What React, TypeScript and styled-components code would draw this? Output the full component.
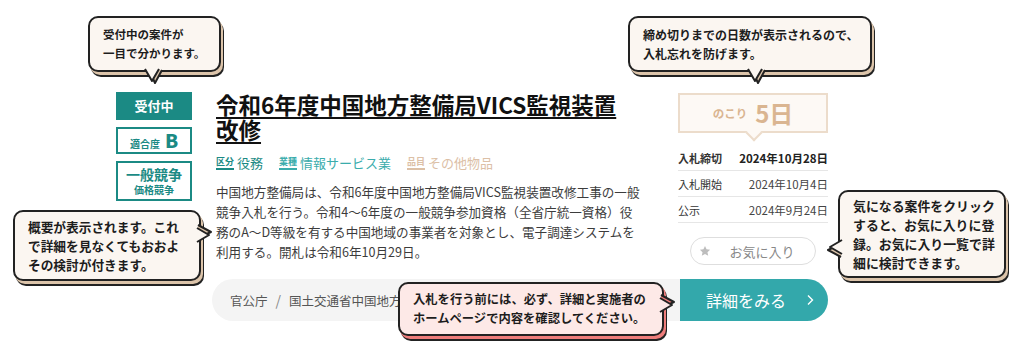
import React from "react";
import styled, { createGlobalStyle, css } from "styled-components";

const GlobalStyle = createGlobalStyle`
  html, body {
    margin: 0;
    padding: 0;
    background: #ffffff;
  }
  body {
    font-family: "Noto Sans CJK JP", "Noto Sans", sans-serif;
    color: #222;
  }
`;

const Page = styled.div`
  position: relative;
  width: 1024px;
  height: 351px;
  overflow: hidden;
  background: #fff;
`;

const Card = styled.div`
  padding: 92px 0 0 116px;
  display: flex;
  flex-direction: column;
`;

const TopRow = styled.div`
  display: flex;
  align-items: flex-start;
  height: 172px;
`;

/* left status column */
const StatusCol = styled.div`
  width: 76px;
  margin-right: 24px;
  display: flex;
  flex-direction: column;
  gap: 7px;
`;

const Badge = styled.div<{ $filled?: boolean; $h: number }>`
  box-sizing: border-box;
  height: ${(p) => p.$h}px;
  display: flex;
  flex-direction: column;
  align-items: center;
  justify-content: center;
  color: #1b8a84;
  font-weight: 700;
  border: 2px solid #1b8a84;
  background: #fff;
  ${(p) =>
    p.$filled &&
    css`
      background: #1b8a84;
      color: #fff;
    `}
`;

const BadgeMain = styled.span<{ $fs: number; $lh: number }>`
  font-size: ${(p) => p.$fs}px;
  line-height: ${(p) => p.$lh}px;
`;

const Fit = styled.div`
  display: flex;
  align-items: baseline;
  gap: 5px;
  font-size: 10px;
  b {
    font-size: 19px;
    line-height: 1;
  }
`;

/* main column */
const Main = styled.div`
  width: 426px;
  display: flex;
  flex-direction: column;
`;

const Title = styled.h1`
  margin: 0;
  font-size: 22.5px;
  line-height: 25px;
  font-weight: 700;
  color: #111;
  text-decoration: underline;
  text-decoration-thickness: 2px;
  text-underline-offset: 3px;
`;

const Tags = styled.div`
  display: flex;
  align-items: center;
  gap: 16px;
  margin-top: 13px;
`;

const Tag = styled.div<{ $c: string }>`
  display: flex;
  align-items: center;
  gap: 3px;
  color: ${(p) => p.$c};
  font-size: 13px;
  line-height: 16px;
`;

const TagLabel = styled.span<{ $c: string }>`
  font-size: 9px;
  font-weight: 700;
  line-height: 11px;
  border-bottom: 2px solid ${(p) => p.$c};
  padding-bottom: 1px;
`;

const Desc = styled.p`
  margin: 11px 0 0;
  font-size: 12.6px;
  line-height: 20px;
  color: #3c3c3c;
`;

/* right column */
const Side = styled.div`
  width: 150px;
  margin-left: 36px;
  display: flex;
  flex-direction: column;
`;

const Remain = styled.div`
  position: relative;
  box-sizing: border-box;
  margin-top: 1px;
  height: 40px;
  border: 2px solid #ecdccb;
  background: #fdf9f5;
  display: flex;
  align-items: center;
  justify-content: center;
  gap: 8px;
  color: #dab591;
  font-weight: 700;
  &::after {
    content: "";
    position: absolute;
    left: 50%;
    bottom: -8px;
    width: 10px;
    height: 10px;
    margin-left: -5px;
    background: #fdf9f5;
    border-right: 2px solid #ecdccb;
    border-bottom: 2px solid #ecdccb;
    transform: rotate(45deg);
  }
`;

const RemainLabel = styled.span`
  font-size: 11.5px;
`;

const RemainDays = styled.span`
  font-size: 24px;
  line-height: 1;
`;

const DateTable = styled.div`
  margin-top: 12px;
  display: flex;
  flex-direction: column;
`;

const DateRow = styled.div<{ $strong?: boolean }>`
  height: 25px;
  display: flex;
  justify-content: space-between;
  align-items: center;
  border-bottom: 1px solid #e6e6e6;
  font-size: 11px;
  color: #333;
  span:last-child {
    font-size: 11.5px;
    color: #444;
  }
  ${(p) =>
    p.$strong &&
    css`
      font-weight: 700;
      span:last-child {
        color: #222;
        font-size: 11.5px;
      }
    `}
`;

const FavButton = styled.button`
  box-sizing: border-box;
  margin: 14px 12px 0;
  height: 28px;
  border: 1px solid #dedede;
  border-radius: 14px;
  background: #fff;
  display: flex;
  align-items: center;
  justify-content: center;
  gap: 18px;
  font-family: inherit;
  font-size: 13px;
  color: #888;
  padding: 0 12px 0 0;
`;

/* bottom row */
const BottomRow = styled.div`
  margin-top: 15px;
  margin-left: 96px;
  width: 616px;
  display: flex;
  height: 42px;
`;

const Crumbs = styled.div`
  flex: 1;
  background: #f4f4f4;
  border-radius: 21px 0 0 21px;
  display: flex;
  align-items: center;
  padding-left: 18px;
  gap: 8px;
  font-size: 12.5px;
  color: #555;
  white-space: nowrap;
  overflow: hidden;
`;

const Slash = styled.span`
  color: #888;
  font-size: 14px;
`;

const DetailButton = styled.button`
  width: 148px;
  border: none;
  background: #33a8ab;
  color: #fff;
  border-radius: 0 21px 21px 0;
  font-family: inherit;
  font-size: 16px;
  display: flex;
  align-items: center;
  justify-content: center;
  gap: 20px;
  padding: 0 0 0 12px;
`;

/* callouts */
const Bubble = styled.div<{
  $x: number;
  $y: number;
  $w: number;
  $h: number;
  $fs: number;
  $pink?: boolean;
}>`
  position: absolute;
  box-sizing: border-box;
  left: ${(p) => p.$x}px;
  top: ${(p) => p.$y}px;
  width: ${(p) => p.$w}px;
  height: ${(p) => p.$h}px;
  padding-left: 13px;
  display: flex;
  align-items: center;
  background: ${(p) => (p.$pink ? "#fde9e7" : "#fbf6f1")};
  border: 2px solid #222;
  border-radius: 10px;
  box-shadow: 2px 3px 0 0 ${(p) => (p.$pink ? "#ee7d7b" : "#dcc4aa")},
    3px 5px 0 0 #222;
  font-size: ${(p) => p.$fs}px;
  line-height: 19px;
  font-weight: 700;
  color: #1d1d1d;
  white-space: nowrap;
  z-index: 2;
`;

const PointerSvg = styled.svg<{ $left: number; $top: number; $rot: number }>`
  position: absolute;
  left: ${(p) => p.$left}px;
  top: ${(p) => p.$top}px;
  transform: rotate(${(p) => p.$rot}deg);
  overflow: visible;
`;

function Pointer(props: {
  left: number;
  top: number;
  rot: number;
  pink?: boolean;
}) {
  const fill = props.pink ? "#fde9e7" : "#fbf6f1";
  const side = props.pink ? "#ee7d7b" : "#dcc4aa";
  return (
    <PointerSvg
      width="18"
      height="14"
      viewBox="0 0 18 14"
      $left={props.left}
      $top={props.top}
      $rot={props.rot}
    >
      <path d="M4,0 L10,13 L17,0" fill={side} stroke="#222" strokeWidth="2" strokeLinejoin="round" />
      <path d="M0,-1 L7,11 L14,-1" fill={fill} stroke="#222" strokeWidth="2" strokeLinejoin="round" />
    </PointerSvg>
  );
}

function StarIcon() {
  return (
    <svg width="12" height="12" viewBox="0 0 24 24">
      <path
        d="M12 2l3.1 6.6 7.1.8-5.3 4.9 1.5 7.1L12 17.8 5.6 21.4l1.5-7.1L1.8 9.4l7.1-.8z"
        fill="#bdbdbd"
      />
    </svg>
  );
}

function Chevron() {
  return (
    <svg width="8" height="12" viewBox="0 0 8 12">
      <path d="M2 1.5 L6.5 6 L2 10.5" fill="none" stroke="#fff" strokeWidth="1.4" />
    </svg>
  );
}

export default function App() {
  return (
    <Page>
      <GlobalStyle />
      <Card>
        <TopRow>
          <StatusCol>
            <Badge $filled $h={28}>
              <BadgeMain $fs={13} $lh={16}>受付中</BadgeMain>
            </Badge>
            <Badge $h={27}>
              <Fit>
                適合度<b>B</b>
              </Fit>
            </Badge>
            <Badge $h={40}>
              <BadgeMain $fs={14} $lh={17}>一般競争</BadgeMain>
              <BadgeMain $fs={10} $lh={13}>価格競争</BadgeMain>
            </Badge>
          </StatusCol>

          <Main>
            <Title>
              令和6年度中国地方整備局VICS監視装置
              <br />
              改修
            </Title>
            <Tags>
              <Tag $c="#1b8a84">
                <TagLabel $c="#1b8a84">区分</TagLabel>役務
              </Tag>
              <Tag $c="#3aacac">
                <TagLabel $c="#3aacac">業種</TagLabel>情報サービス業
              </Tag>
              <Tag $c="#dcc0a6">
                <TagLabel $c="#dcc0a6">品目</TagLabel>その他物品
              </Tag>
            </Tags>
            <Desc>
              中国地方整備局は、令和6年度中国地方整備局VICS監視装置改修工事の一般競争入札を行う。令和4〜6年度の一般競争参加資格（全省庁統一資格）役務のA〜D等級を有する中国地域の事業者を対象とし、電子調達システムを利用する。開札は令和6年10月29日。
            </Desc>
          </Main>

          <Side>
            <Remain>
              <RemainLabel>のこり</RemainLabel>
              <RemainDays>5日</RemainDays>
            </Remain>
            <DateTable>
              <DateRow $strong>
                <span>入札締切</span>
                <span>2024年10月28日</span>
              </DateRow>
              <DateRow>
                <span>入札開始</span>
                <span>2024年10月4日</span>
              </DateRow>
              <DateRow>
                <span>公示</span>
                <span>2024年9月24日</span>
              </DateRow>
            </DateTable>
            <FavButton>
              <StarIcon />
              お気に入り
            </FavButton>
          </Side>
        </TopRow>

        <BottomRow>
          <Crumbs>
            官公庁<Slash>/</Slash>国土交通省中国地方整備局
          </Crumbs>
          <DetailButton>
            詳細をみる
            <Chevron />
          </DetailButton>
        </BottomRow>
      </Card>

      <Bubble $x={88} $y={16} $w={133} $h={56} $fs={11.5}>
        受付中の案件が
        <br />
        一目で分かります。
        <Pointer left={55} top={52} rot={0} />
      </Bubble>

      <Bubble $x={628} $y={16} $w={244} $h={56} $fs={12}>
        締め切りまでの日数が表示されるので、
        <br />
        入札忘れを防げます。
        <Pointer left={118} top={52} rot={0} />
      </Bubble>

      <Bubble $x={13} $y={210} $w={188} $h={71} $fs={12.7}>
        概要が表示されます。これ
        <br />
        で詳細を見なくてもおおよ
        <br />
        その検討が付きます。
        <Pointer left={181} top={14} rot={-90} />
      </Bubble>

      <Bubble $x={838} $y={190} $w={168} $h={88} $fs={12.9}>
        気になる案件をクリック
        <br />
        すると、お気に入りに登
        <br />
        録。お気に入り一覧で詳
        <br />
        細に検討できます。
        <Pointer left={-15} top={50} rot={90} />
      </Bubble>

      <Bubble $x={398} $y={282} $w={266} $h={54} $fs={12.3} $pink>
        入札を行う前には、必ず、詳細と実施者の
        <br />
        ホームページで内容を確認してください。
        <Pointer left={259} top={12} rot={-90} pink />
      </Bubble>
    </Page>
  );
}
